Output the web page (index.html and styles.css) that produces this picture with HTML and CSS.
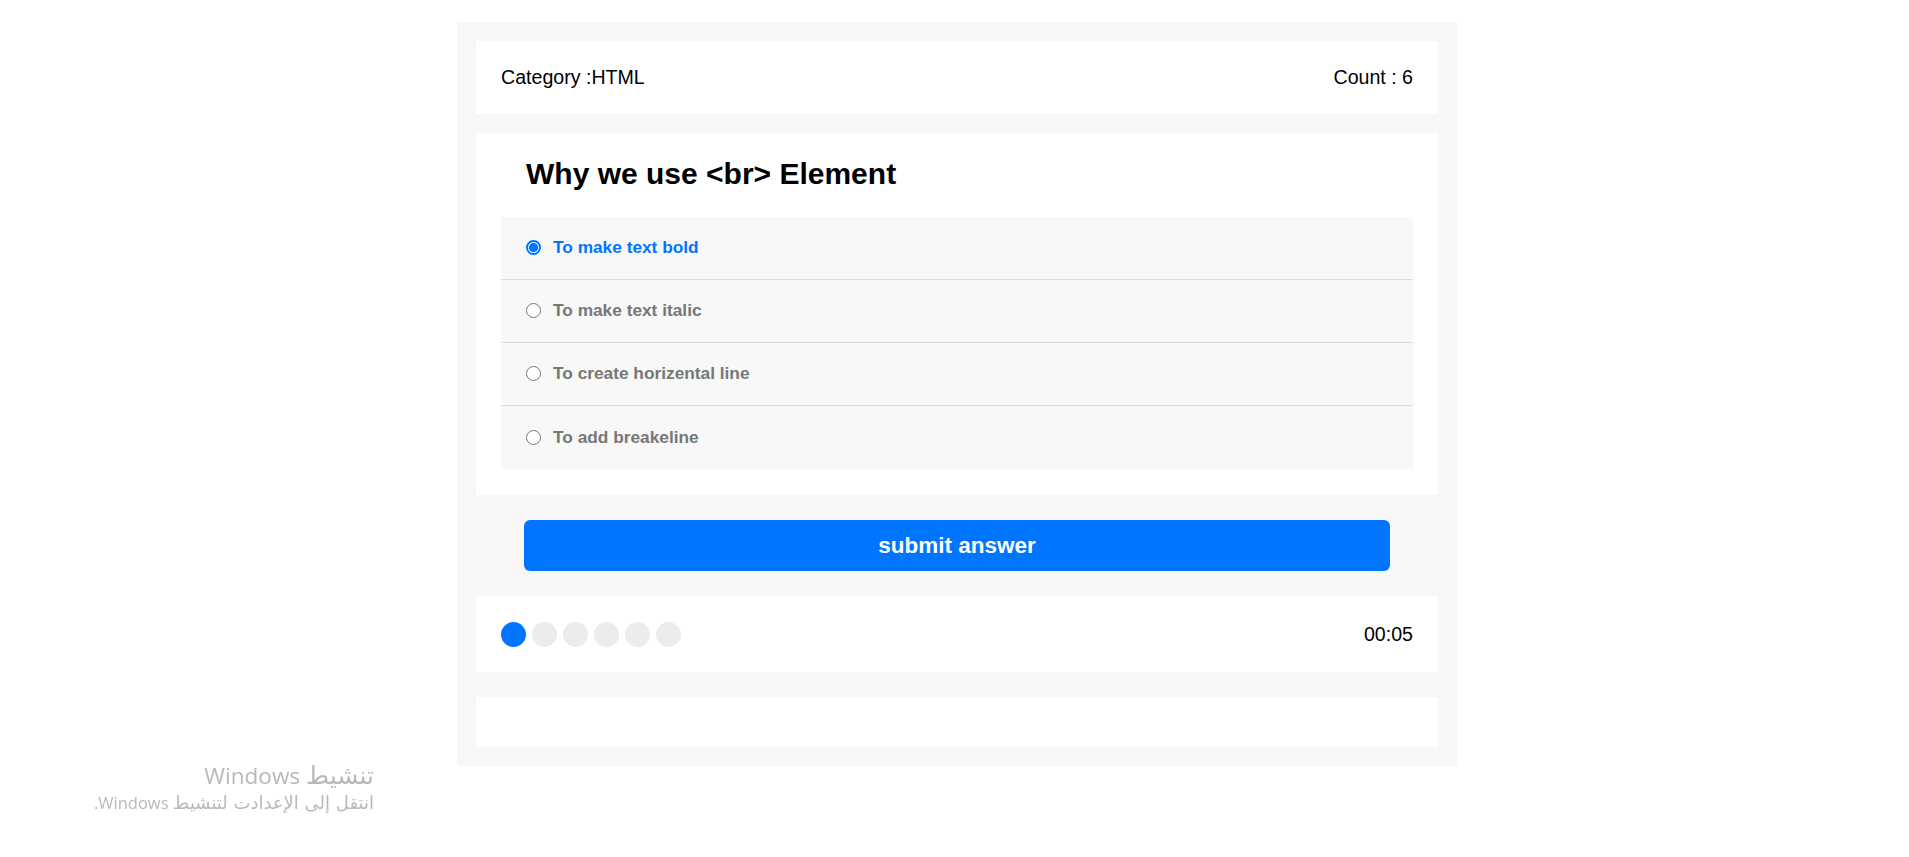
FILE: index.html
```html
<!DOCTYPE html>
<html lang="en">
<head>
<meta charset="utf-8">
<title>Quiz</title>
<link rel="stylesheet" href="styles.css">
</head>
<body>
<div class="quiz">
  <div class="card info">
    <span class="category">Category :HTML</span>
    <span class="count">Count : 6</span>
  </div>
  <div class="card question">
    <h2 class="title">Why we use &lt;br&gt; Element</h2>
    <div class="answers">
      <div class="answer checked"><span class="radio"></span><span class="label">To make text bold</span></div>
      <div class="answer"><span class="radio"></span><span class="label">To make text italic</span></div>
      <div class="answer"><span class="radio"></span><span class="label">To create horizental line</span></div>
      <div class="answer"><span class="radio"></span><span class="label">To add breakeline</span></div>
    </div>
  </div>
  <button class="submit">submit answer</button>
  <div class="card bullets">
    <div class="spans">
      <span class="dot on"></span><span class="dot"></span><span class="dot"></span><span class="dot"></span><span class="dot"></span><span class="dot"></span>
    </div>
    <span class="timer">00:05</span>
  </div>
  <div class="card results"></div>
</div>
<div class="watermark" dir="rtl">
  <div class="wm-title"><span class="ar">تنشيط</span> Windows</div>
  <div class="wm-sub"><span class="ar">انتقل إلى الإعدادت لتنشيط</span> Windows.</div>
</div>
</body>
</html>
```
FILE: styles.css
```css
* { box-sizing: border-box; }
html, body { margin: 0; background: #fff; }
body {
  padding: 22px 0 0 5px;
  font-family: "Liberation Sans", Arial, sans-serif;
  color: #000;
}
.quiz {
  width: 1000px;
  margin: 0 auto;
  background: #f7f7f7;
  padding: 19px;
}
.card { background: #fff; }
.info {
  height: 73px;
  padding: 0 25px;
  display: flex;
  justify-content: space-between;
  align-items: center;
  font-size: 19.6px;
}
.question {
  margin-top: 19px;
  padding: 24px 25px 26.5px;
}
.title {
  margin: 0 0 25px;
  padding-left: 25px;
  font-size: 30px;
  font-weight: bold;
  line-height: 34.5px;
}
.answers { background: #f8f8f8; }
.answer {
  height: 63px;
  padding: 0 25px;
  display: flex;
  align-items: center;
  gap: 12px;
  border-bottom: 1px solid #dcdcdc;
  font-size: 17.3px;
  font-weight: bold;
  color: #777;
}
.answer:last-child { border-bottom: none; }
.answer.checked { color: #0075ff; }
.radio {
  width: 15px;
  height: 15px;
  border-radius: 50%;
  border: 1.3px solid #767676;
  background: #fff;
  flex: none;
}
.answer.checked .radio {
  border: 2px solid #0075ff;
  background: radial-gradient(circle, #0075ff 0 4.2px, #fff 4.8px);
}
.submit {
  display: block;
  width: 866px;
  height: 51px;
  margin: 25px auto;
  border: none;
  border-radius: 6px;
  background: #0075ff;
  color: #fff;
  font-family: "Liberation Sans", Arial, sans-serif;
  font-size: 22.5px;
  font-weight: bold;
  padding: 0;
}
.bullets {
  height: 76px;
  padding: 0 25px;
  display: flex;
  justify-content: space-between;
  align-items: center;
  font-size: 19.6px;
}
.spans { display: flex; gap: 6.1px; }
.dot {
  width: 25px;
  height: 25px;
  border-radius: 50%;
  background: #ececec;
}
.dot.on { background: #0075ff; }
.results {
  margin-top: 25px;
  height: 49.5px;
}
.watermark {
  position: fixed;
  top: 762px;
  left: 40px;
  width: 334px;
  text-align: right;
  color: #b9b9bd;
  font-family: "Open Sans", "DejaVu Sans", sans-serif;
}
.watermark .ar { font-family: "DejaVu Sans", sans-serif; }
.wm-title { font-size: 22.5px; line-height: 27px; }
.wm-title .ar { font-size: 25px; }
.wm-sub { font-size: 16.5px; line-height: 27px; }
.wm-sub .ar { font-size: 18px; }
```
